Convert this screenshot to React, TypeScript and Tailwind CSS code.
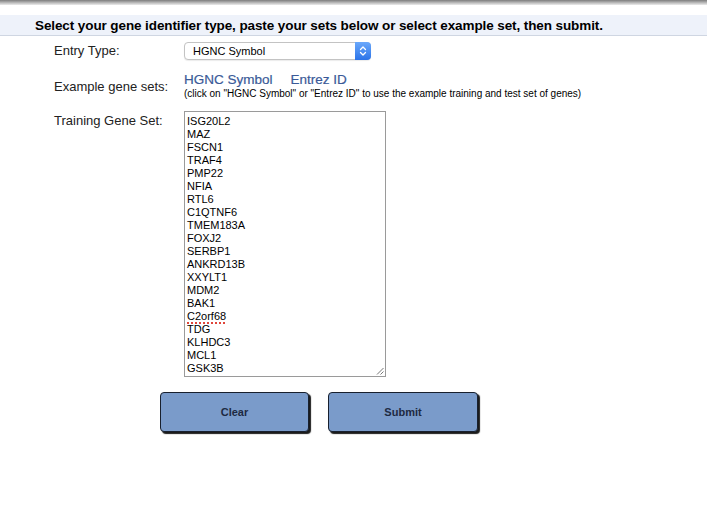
const genes = [
  "ISG20L2",
  "MAZ",
  "FSCN1",
  "TRAF4",
  "PMP22",
  "NFIA",
  "RTL6",
  "C1QTNF6",
  "TMEM183A",
  "FOXJ2",
  "SERBP1",
  "ANKRD13B",
  "XXYLT1",
  "MDM2",
  "BAK1",
  "C2orf68",
  "TDG",
  "KLHDC3",
  "MCL1",
  "GSK3B",
];

const App = () => {
  return (
    <div className="w-[707px] h-[516px] bg-white font-['Liberation_Sans',Arial,sans-serif] text-[#222]">
      <div className="h-[5px] bg-gradient-to-b from-[#7d7d7d] via-[#b5b5b5] to-[#ececec]" />

      <div className="mt-[10px] h-[21px] bg-[#eef2fa] border-b border-[#cfd6e2] pl-[35px] pt-[2px] flex items-center">
        <h1 className="text-[13.5px] font-bold text-black tracking-[-0.1px]">
          Select your gene identifier type, paste your sets below or select example set, then submit.
        </h1>
      </div>

      <div className="pl-[54px]">
        <div className="flex items-center mt-[6px] h-[18px]">
          <div className="w-[130px] text-[13px]">Entry Type:</div>
          <div className="relative w-[187px] h-[18px] rounded-[4px] border border-[#c3c3c3] bg-white shadow-[0_1px_1px_rgba(0,0,0,0.08)] flex items-center">
            <span className="pl-[8px] text-[11px] text-black">HGNC Symbol</span>
            <div className="absolute right-[-1px] top-[-1px] w-[16px] h-[18px] rounded-r-[4px] bg-gradient-to-b from-[#6aa8fb] to-[#2b73e8] flex items-center justify-center">
              <svg width="8" height="12" viewBox="0 0 8 12" fill="none" stroke="white" strokeWidth="1.3" strokeLinecap="round" strokeLinejoin="round">
                <path d="M1.5 4.5 L4 2 L6.5 4.5" />
                <path d="M1.5 7.5 L4 10 L6.5 7.5" />
              </svg>
            </div>
          </div>
        </div>

        <div className="flex mt-[12px]">
          <div className="w-[130px] text-[13px] pt-[5px]">Example gene sets:</div>
          <div>
            <div className="flex gap-[18px] text-[13.5px] leading-[16px] text-[#3a5a98] [-webkit-text-stroke:0.2px_#3a5a98]">
              <span>HGNC Symbol</span>
              <span>Entrez ID</span>
            </div>
            <div className="text-[10px] leading-[12px] text-black">
              (click on "HGNC Symbol" or "Entrez ID" to use the example training and test set of genes)
            </div>
          </div>
        </div>

        <div className="flex mt-[11px]">
          <div className="w-[130px] text-[13px]">Training Gene Set:</div>
          <div className="relative w-[202px] h-[266px] border border-[#9a9a9a] px-[2px] pt-[3px] text-[11px] leading-[13px] text-black overflow-hidden">
            {genes.map((g) => (
              <div key={g}>
                {g === "C2orf68" ? (
                  <span className="underline decoration-dotted decoration-[#e0453a] decoration-2 underline-offset-2">
                    {g}
                  </span>
                ) : (
                  g
                )}
              </div>
            ))}
            <svg className="absolute right-[1px] bottom-[1px]" width="8" height="8" viewBox="0 0 8 8" stroke="#777" strokeWidth="1">
              <path d="M7.5 1 L1 7.5" />
              <path d="M7.5 4.5 L4.5 7.5" />
            </svg>
          </div>
        </div>
      </div>

      <div className="flex gap-[19px] pl-[160px] mt-[15px]">
        <button className="w-[149px] h-[40px] bg-[#7a9bca] border border-[#18202e] rounded-[4px] shadow-[2px_2px_1px_#1b1b1b] text-[11px] font-bold text-[#1e2a42]">
          Clear
        </button>
        <button className="w-[150px] h-[40px] bg-[#7a9bca] border border-[#18202e] rounded-[4px] shadow-[2px_2px_1px_#1b1b1b] text-[11px] font-bold text-[#1e2a42]">
          Submit
        </button>
      </div>
    </div>
  );
};

export default App;
